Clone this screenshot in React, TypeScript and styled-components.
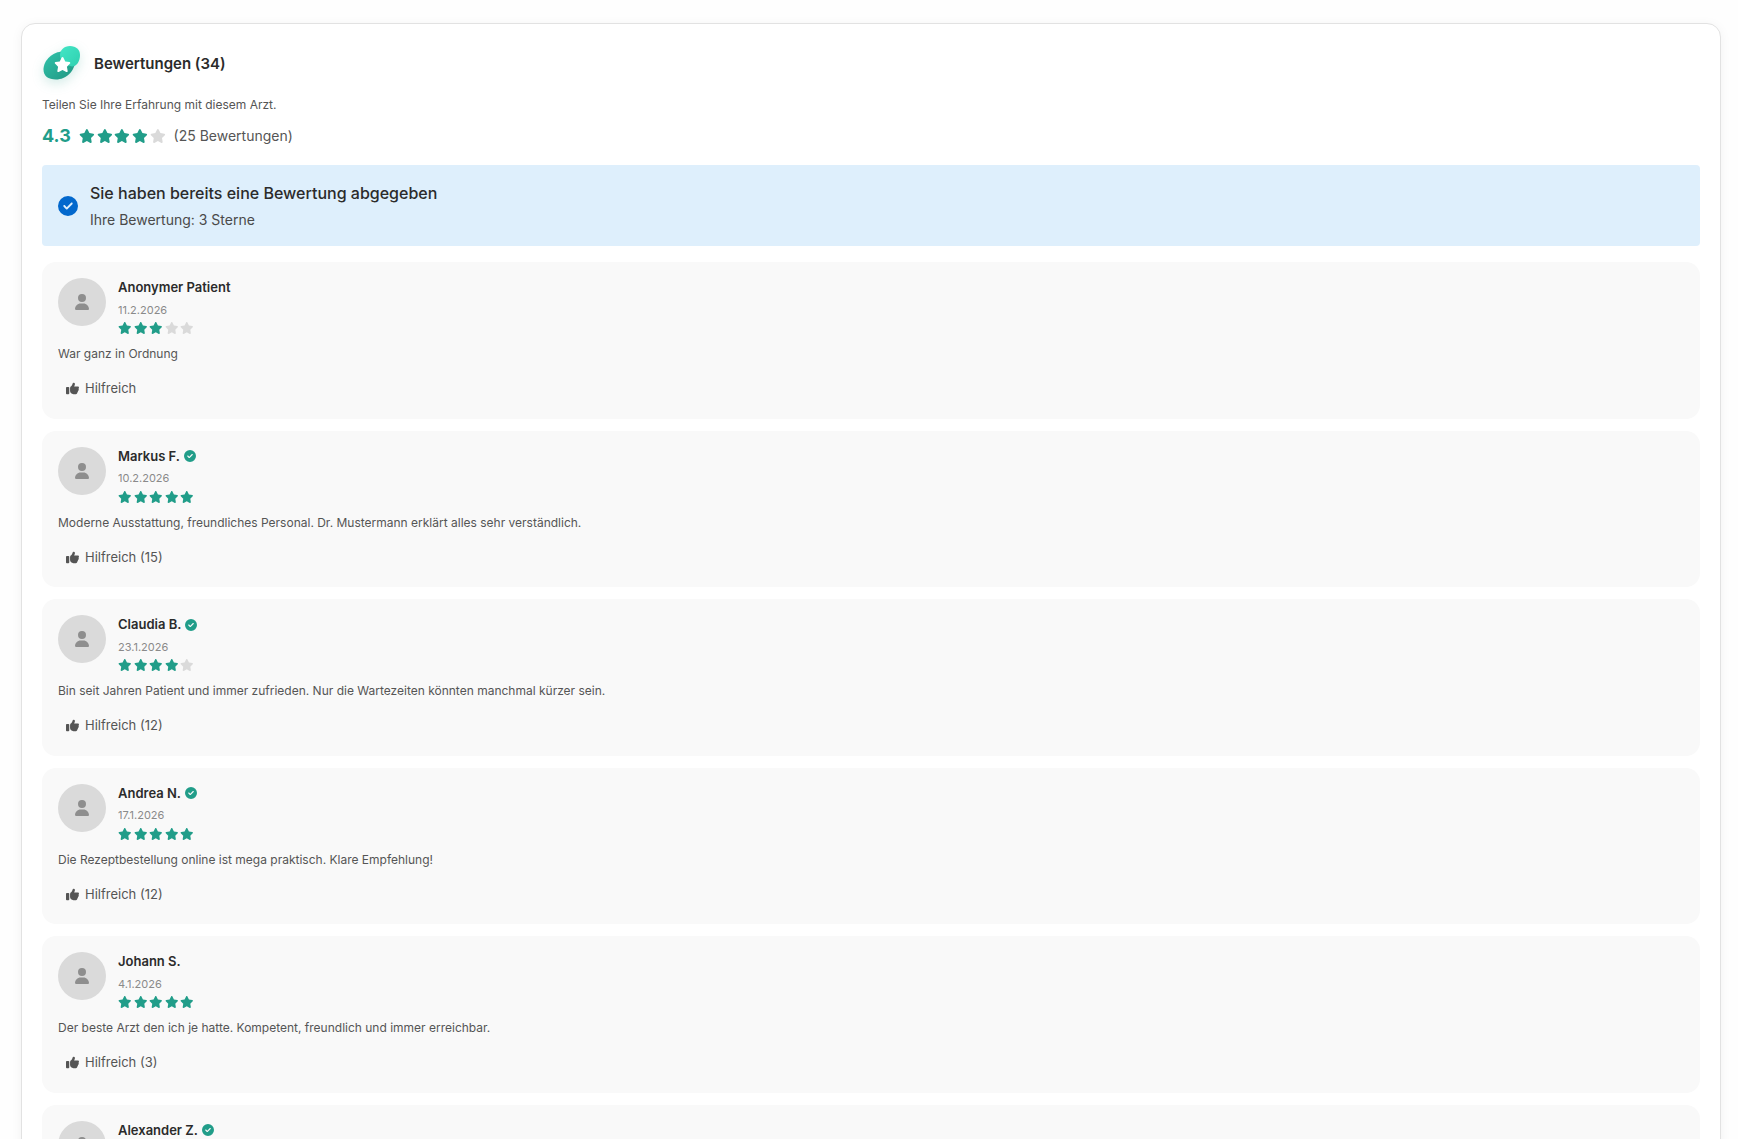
import React from 'react';
import styled, { createGlobalStyle } from 'styled-components';
import { FaCircleCheck, FaStar, FaThumbsUp, FaUser } from 'react-icons/fa6';

const colors = {
  primary: '#219d89',
  text: '#2b2b2b',
  muted: '#555555',
  faint: '#8a8a8a',
  empty: '#dadada',
};

const GlobalStyle = createGlobalStyle`
  *, *::before, *::after { box-sizing: border-box; }
  body {
    margin: 0;
    background: #fefefe;
    color: ${colors.text};
    font-family: Inter, "Liberation Sans", sans-serif;
    line-height: 1.5;
  }
  h2, h3, p, ul { margin: 0; padding: 0; }
`;

const Page = styled.main`
  padding: 23px 17px 24px 21px;
`;

const Panel = styled.section`
  padding: 20px;
  background: #ffffff;
  border: 1px solid #e2e2e2;
  border-radius: 14px;
  box-shadow: 0 2px 12px rgba(0, 0, 0, 0.05);
`;

const PanelHeader = styled.header`
  display: flex;
  align-items: center;
  gap: 12px;
  margin-bottom: 12px;
`;

const BlobIcon = styled.svg`
  width: 40px;
  height: 40px;
  overflow: visible;
  filter: drop-shadow(0 4px 6px rgba(33, 157, 137, 0.2));
`;

const PanelTitle = styled.h2`
  font-size: 15px;
  font-weight: 600;
`;

const Intro = styled.p`
  margin-bottom: 8px;
  font-size: 12px;
  color: ${colors.muted};
`;

const Summary = styled.div`
  display: flex;
  align-items: center;
  gap: 8px;
  margin-bottom: 16px;
`;

const Score = styled.strong`
  font-size: 18px;
  font-weight: 700;
  color: ${colors.primary};
`;

const Count = styled.span`
  font-size: 14px;
  line-height: 21px;
  color: ${colors.muted};
`;

const StarRow = styled.div<{ $size: number }>`
  display: flex;
  gap: 2px;
  font-size: ${({ $size }) => $size}px;

  svg {
    flex: none;
    width: 1.125em;
    height: 1em;
  }
`;

const Star = styled(FaStar)<{ $filled: boolean }>`
  color: ${({ $filled }) => ($filled ? colors.primary : colors.empty)};
`;

const Notice = styled.div`
  display: flex;
  align-items: center;
  gap: 12px;
  margin-bottom: 16px;
  padding: 16px;
  background: #deeffc;
  border-radius: 4px;
`;

const NoticeIcon = styled(FaCircleCheck)`
  flex: none;
  font-size: 20px;
  color: #0268cd;
`;

const NoticeBody = styled.div`
  display: grid;
  gap: 4px;
`;

const NoticeTitle = styled.p`
  font-size: 16px;
  font-weight: 500;
`;

const NoticeText = styled.p`
  font-size: 14px;
  color: #4a4a4a;
`;

const ReviewList = styled.ul`
  display: grid;
  gap: 12px;
  list-style: none;
`;

const ReviewCard = styled.li`
  padding: 16px;
  background: #f9f9f9;
  border-radius: 14px;
`;

const ReviewHeader = styled.div`
  display: flex;
  align-items: flex-start;
  gap: 12px;
  margin-bottom: 11px;
`;

const Avatar = styled.div`
  display: grid;
  place-items: center;
  flex: none;
  width: 48px;
  height: 48px;
  border-radius: 50%;
  background: ${colors.empty};
  color: #8e8e8e;
  font-size: 16px;
`;

const Author = styled.div`
  display: grid;
  gap: 4px;
`;

const NameRow = styled.div`
  display: flex;
  align-items: center;
  gap: 4px;
`;

const Name = styled.h3`
  font-size: 13px;
  font-weight: 600;
`;

const VerifiedIcon = styled(FaCircleCheck)`
  font-size: 12px;
  color: ${colors.primary};
`;

const ReviewDate = styled.time`
  font-size: 11px;
  color: ${colors.faint};
`;

const ReviewText = styled.p`
  margin-bottom: 12px;
  font-size: 12px;
  color: ${colors.muted};
`;

const HelpfulButton = styled.button`
  display: flex;
  align-items: center;
  gap: 6px;
  padding: 4px 8px;
  border: 0;
  border-radius: 4px;
  background: transparent;
  color: ${colors.muted};
  font: inherit;
  font-size: 13px;
  cursor: pointer;

  svg {
    width: 13px;
    height: 13px;
  }
`;

interface Review {
  name: string;
  verified: boolean;
  date: string;
  stars: number;
  text: string;
  helpful: number;
}

const reviews: Review[] = [
  { name: 'Anonymer Patient', verified: false, date: '11.2.2026', stars: 3, text: 'War ganz in Ordnung', helpful: 0 },
  { name: 'Markus F.', verified: true, date: '10.2.2026', stars: 5, text: 'Moderne Ausstattung, freundliches Personal. Dr. Mustermann erklärt alles sehr verständlich.', helpful: 15 },
  { name: 'Claudia B.', verified: true, date: '23.1.2026', stars: 4, text: 'Bin seit Jahren Patient und immer zufrieden. Nur die Wartezeiten könnten manchmal kürzer sein.', helpful: 12 },
  { name: 'Andrea N.', verified: true, date: '17.1.2026', stars: 5, text: 'Die Rezeptbestellung online ist mega praktisch. Klare Empfehlung!', helpful: 12 },
  { name: 'Johann S.', verified: false, date: '4.1.2026', stars: 5, text: 'Der beste Arzt den ich je hatte. Kompetent, freundlich und immer erreichbar.', helpful: 3 },
  { name: 'Alexander Z.', verified: true, date: '', stars: 5, text: '', helpful: 0 },
];

function Stars({ value, size }: { value: number; size: number }) {
  return (
    <StarRow $size={size} role="img" aria-label={`${value}/5`}>
      {[1, 2, 3, 4, 5].map((n) => (
        <Star key={n} $filled={n <= value} />
      ))}
    </StarRow>
  );
}

function ReviewsIcon() {
  return (
    <BlobIcon viewBox="0 0 40 40" aria-hidden="true">
      <defs>
        <linearGradient id="blobBack" x1="0" y1="0" x2="1" y2="1">
          <stop offset="0" stopColor="#2fc4ab" />
          <stop offset="1" stopColor="#219581" />
        </linearGradient>
        <linearGradient id="blobFront" x1="0" y1="0" x2="1" y2="1">
          <stop offset="0" stopColor="#43e6c6" />
          <stop offset="1" stopColor="#2fd0b0" />
        </linearGradient>
      </defs>
      <path
        d="M1.5 25.5C1.5 16 11 7.5 21 7.5C28 7.5 33 11 33 17C33 27 24 35.5 14 35.5C6 35.5 1.5 32 1.5 25.5Z"
        fill="url(#blobBack)"
      />
      <path
        d="M18 11C18 6 22 2 28 2C34 2 38 5.5 38 11C38 18 34 22.5 30 22.5C23 21 18 17 18 11Z"
        fill="url(#blobFront)"
      />
      <FaStar x="12" y="12" width="16" height="16" size={17} color="#ffffff" />
    </BlobIcon>
  );
}

export default function App() {
  return (
    <>
      <GlobalStyle />
      <Page>
        <Panel>
          <PanelHeader>
            <ReviewsIcon />
            <PanelTitle>Bewertungen (34)</PanelTitle>
          </PanelHeader>
          <Intro>Teilen Sie Ihre Erfahrung mit diesem Arzt.</Intro>
          <Summary>
            <Score>4.3</Score>
            <Stars value={4} size={14} />
            <Count>(25 Bewertungen)</Count>
          </Summary>
          <Notice>
            <NoticeIcon />
            <NoticeBody>
              <NoticeTitle>Sie haben bereits eine Bewertung abgegeben</NoticeTitle>
              <NoticeText>Ihre Bewertung: 3 Sterne</NoticeText>
            </NoticeBody>
          </Notice>
          <ReviewList>
            {reviews.map((review) => (
              <ReviewCard key={review.name}>
                <ReviewHeader>
                  <Avatar>
                    <FaUser />
                  </Avatar>
                  <Author>
                    <NameRow>
                      <Name>{review.name}</Name>
                      {review.verified && <VerifiedIcon />}
                    </NameRow>
                    {review.date && <ReviewDate>{review.date}</ReviewDate>}
                    <Stars value={review.stars} size={12} />
                  </Author>
                </ReviewHeader>
                {review.text && <ReviewText>{review.text}</ReviewText>}
                <HelpfulButton type="button">
                  <FaThumbsUp />
                  Hilfreich{review.helpful > 0 && ` (${review.helpful})`}
                </HelpfulButton>
              </ReviewCard>
            ))}
          </ReviewList>
        </Panel>
      </Page>
    </>
  );
}
